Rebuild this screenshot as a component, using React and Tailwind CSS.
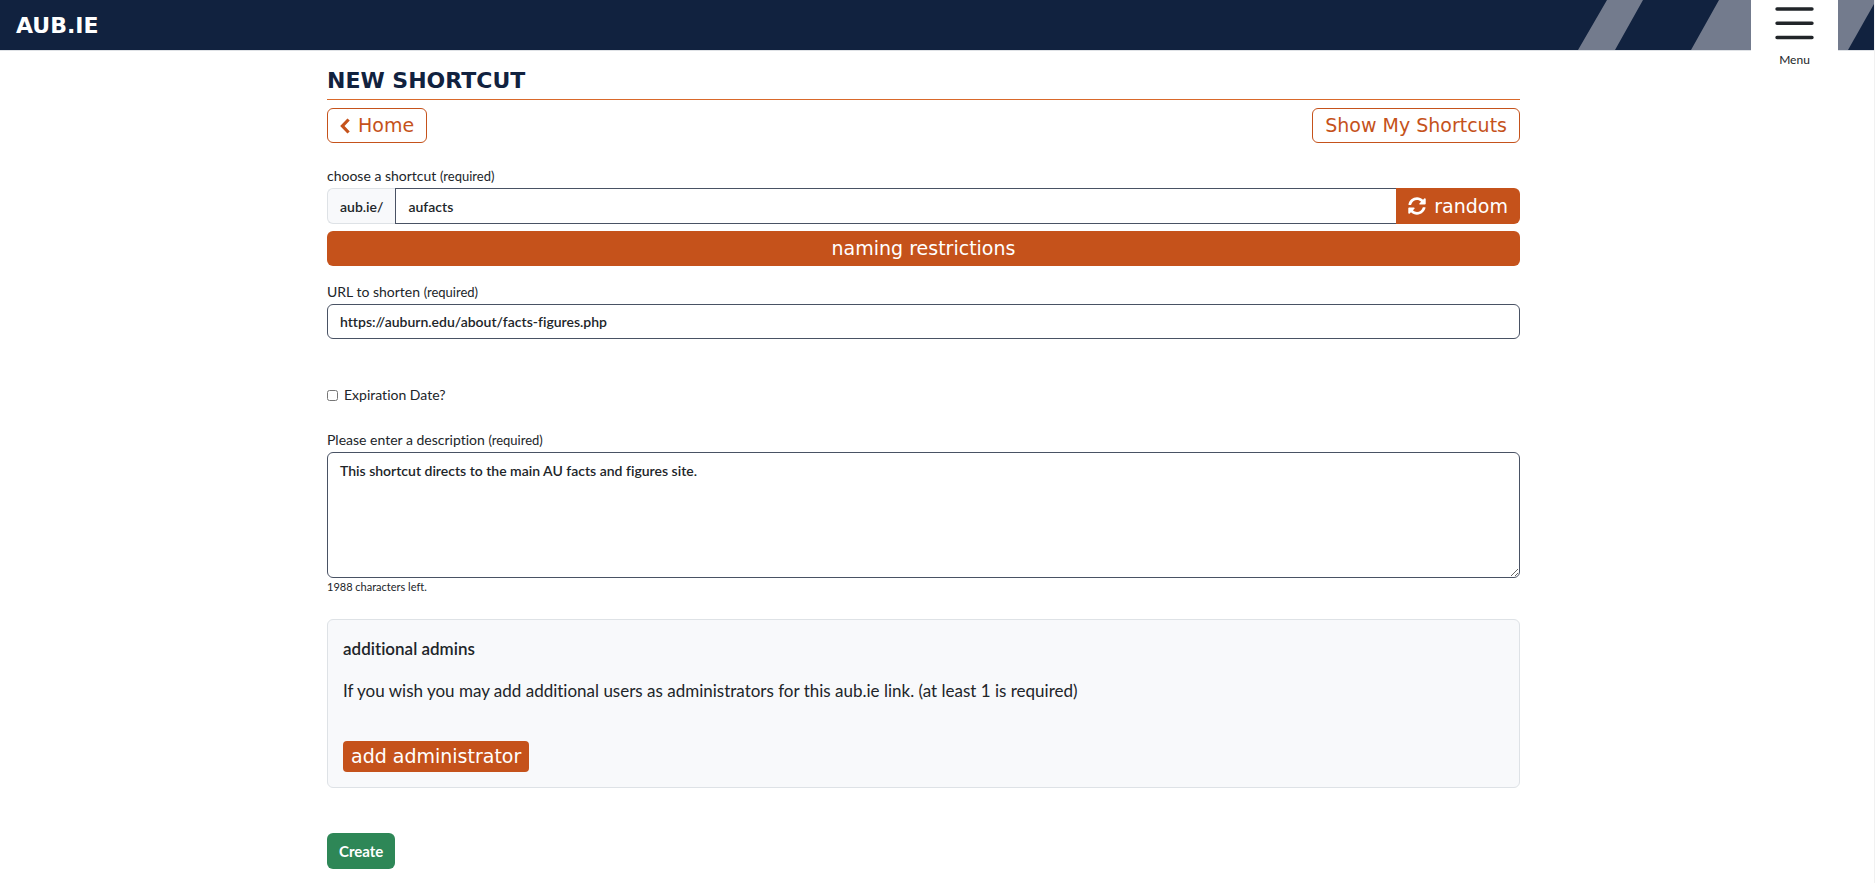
import { useState } from 'react'
import { FaSyncAlt } from 'react-icons/fa'

const MAX_DESCRIPTION = 2048

const FIELD = 'border border-[#495264] bg-white px-3 text-[14px] leading-[21px] font-semibold text-[#212529]'
const ORANGE = 'bg-[#c5521b] font-["DejaVu_Sans",sans-serif] text-[19px] text-white'
const OUTLINE = 'flex h-[35px] items-center rounded-md border border-[#c5521b] px-3 font-["DejaVu_Sans",sans-serif] text-[19px] text-[#c5521b]'

function Header() {
  return (
    <header className="flex h-[51px] items-stretch border-b border-[#dfe2e6] bg-[#11223f]">
      <a
        href="#"
        className='flex flex-1 items-center pl-4 font-["DejaVu_Sans",sans-serif] text-[22px] font-bold text-white'
      >
        AUB.IE
      </a>
      <svg className="h-[50px] w-[173px]" viewBox="0 0 173 50" aria-hidden="true">
        <path fill="#737b8d" d="M29 0h36L37 50H0zM141 0h32v50h-60z" />
      </svg>
      <button className="flex h-[74px] w-[87px] flex-col items-center bg-white pt-[7px]">
        <svg className="h-[33px] w-[39px]" viewBox="0 0 39 33" aria-hidden="true">
          <path stroke="#212529" strokeWidth="3.4" strokeLinecap="round" d="M2 2h35M2 16.300h35M2 30.500h35" />
        </svg>
        <span className="mt-3 text-[12px] leading-4 text-[#212529]">Menu</span>
      </button>
      <svg className="h-[50px] w-[36px]" viewBox="0 0 36 50" aria-hidden="true">
        <path fill="#737b8d" d="M0 0h36v4L10 50H0z" />
      </svg>
    </header>
  )
}

function Label({ htmlFor, children }) {
  return (
    <label htmlFor={htmlFor} className="block text-[14px] leading-6">
      {children} <span className="text-[13px]">(required)</span>
    </label>
  )
}

export default function App() {
  const [shortcut, setShortcut] = useState('aufacts')
  const [url, setUrl] = useState('https://auburn.edu/about/facts-figures.php')
  const [expires, setExpires] = useState(false)
  const [description, setDescription] = useState(
    'This shortcut directs to the main AU facts and figures site.'
  )

  function handleRandom() {
    setShortcut(Math.random().toString(36).slice(2, 9))
  }

  return (
    <div className='min-h-screen border-r border-[#f1f1f1] bg-white font-["Lato",sans-serif] text-[#212529] [font-variant-ligatures:none]'>
      <Header />
      <main className="pr-[27px] pb-3">
        <form className="mx-auto max-w-[1193px]" onSubmit={e => e.preventDefault()}>
          <h1 className='border-b border-[#d9692b] pt-4 pb-1 font-["DejaVu_Sans",sans-serif] text-[22px] leading-7 font-bold text-[#11223f]'>
            NEW SHORTCUT
          </h1>

          <div className="mt-2 flex justify-between">
            <a href="#" className={OUTLINE}>
              <svg className="mr-2 h-4 w-[10px]" viewBox="0 0 10 16" fill="none" aria-hidden="true">
                <path stroke="currentColor" strokeWidth="3.2" d="M8.600 1.500 2.400 8l6.200 6.500" />
              </svg>
              Home
            </a>
            <a href="#" className={OUTLINE}>Show My Shortcuts</a>
          </div>

          <div className="mt-[21px]">
            <Label htmlFor="shortcut">choose a shortcut</Label>
            <div className="flex h-9">
              <span className="flex items-center rounded-l-md border border-r-0 border-[#dee2e6] bg-[#f8f9fb] px-3 text-[14px] font-semibold">
                aub.ie/
              </span>
              <input
                id="shortcut"
                className={`min-w-0 flex-1 border-r-0 ${FIELD}`}
                value={shortcut}
                onChange={e => setShortcut(e.target.value)}
              />
              <button type="button" onClick={handleRandom} className={`flex items-center rounded-r-md px-3 ${ORANGE}`}>
                <FaSyncAlt className="mr-2 size-[18px]" />
                random
              </button>
            </div>
            <button type="button" className={`mt-[7px] h-[35px] w-full rounded-md ${ORANGE}`}>
              naming restrictions
            </button>
          </div>

          <div className="mt-[14px]">
            <Label htmlFor="url">URL to shorten</Label>
            <input
              id="url"
              className={`block h-[35px] w-full rounded-md ${FIELD}`}
              value={url}
              onChange={e => setUrl(e.target.value)}
            />
          </div>

          <label className="mt-11 flex items-center gap-[6px] text-[14px] leading-6">
            <input
              type="checkbox"
              className="size-[11px]"
              checked={expires}
              onChange={e => setExpires(e.target.checked)}
            />
            Expiration Date?
          </label>

          <div className="mt-[21px]">
            <Label htmlFor="description">Please enter a description</Label>
            <textarea
              id="description"
              className={`block h-[126px] w-full resize-y rounded-md py-[7px] ${FIELD}`}
              value={description}
              onChange={e => setDescription(e.target.value)}
            />
            <p className="text-[11px] leading-[18px]">{MAX_DESCRIPTION - description.length} characters left.</p>
          </div>

          <section className="mt-[23px] rounded-md border border-[#dee2e6] bg-[#f8f9fb] p-[15px]">
            <h2 className="text-[17px] leading-7 font-semibold">additional admins</h2>
            <p className="mt-[14px] text-[17px] leading-7">
              If you wish you may add additional users as administrators for this aub.ie link. (at least 1 is required)
            </p>
            <button type="button" className={`mt-9 h-[31px] rounded px-2 ${ORANGE}`}>
              add administrator
            </button>
          </section>

          <button className="mt-[45px] h-9 rounded-md bg-[#2e8757] px-3 text-[15px] font-bold text-white">
            Create
          </button>
        </form>
      </main>
    </div>
  )
}
